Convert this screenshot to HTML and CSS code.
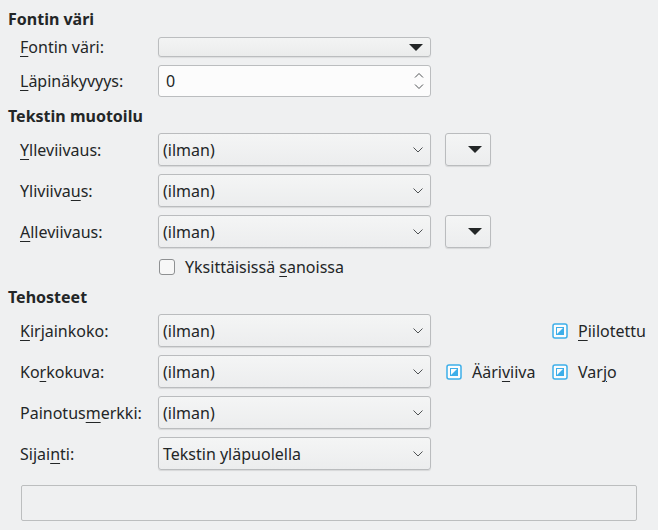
FILE: index.html
```html
<!DOCTYPE html>
<html lang="fi">
<head>
<meta charset="utf-8">
<title>Fontin tehosteet</title>
<link rel="stylesheet" href="styles.css">
</head>
<body>
<div class="page">
  <div class="heading">Fontin väri</div>
  <div class="form">
    <div class="lbl"><u>F</u>ontin väri:</div>
    <div class="colorcombo"><svg class="tri" width="14" height="7" viewBox="0 0 14 7"><path d="M0 0H14L7 7Z" fill="#232627"/></svg></div>
    <div></div>
    <div class="lbl"><u>L</u>äpinäkyvyys:</div>
    <div class="spin"><span>0</span>
      <svg class="spinarrows" width="10" height="18" viewBox="0 0 10 18"><path d="M1 5.5L5 1.5L9 5.5M1 12.5L5 16.5L9 12.5" fill="none" stroke="#4f5254" stroke-width="1"/></svg>
    </div>
    <div></div>
  </div>

  <div class="heading later">Tekstin muotoilu</div>
  <div class="form">
    <div class="lbl"><u>Y</u>lleviivaus:</div>
    <div class="combo"><span>(ilman)</span><svg width="10" height="6" viewBox="0 0 10 6"><path d="M0.5 0.5L5 5L9.5 0.5" fill="none" stroke="#4f5254" stroke-width="1"/></svg></div>
    <div class="sidebtn"><svg width="14" height="7" viewBox="0 0 14 7"><path d="M0 0H14L7 7Z" fill="#232627"/></svg></div>

    <div class="lbl">Yliviiva<u>u</u>s:</div>
    <div class="combo"><span>(ilman)</span><svg width="10" height="6" viewBox="0 0 10 6"><path d="M0.5 0.5L5 5L9.5 0.5" fill="none" stroke="#4f5254" stroke-width="1"/></svg></div>
    <div></div>

    <div class="lbl"><u>A</u>lleviivaus:</div>
    <div class="combo"><span>(ilman)</span><svg width="10" height="6" viewBox="0 0 10 6"><path d="M0.5 0.5L5 5L9.5 0.5" fill="none" stroke="#4f5254" stroke-width="1"/></svg></div>
    <div class="sidebtn"><svg width="14" height="7" viewBox="0 0 14 7"><path d="M0 0H14L7 7Z" fill="#232627"/></svg></div>

    <div></div>
    <div class="checkrow"><span class="box"></span><span>Yksittäisissä <u>s</u>anoissa</span></div>
  </div>

  <div class="heading later">Tehosteet</div>
  <div class="form">
    <div class="lbl"><u>K</u>irjainkoko:</div>
    <div class="combo"><span>(ilman)</span><svg width="10" height="6" viewBox="0 0 10 6"><path d="M0.5 0.5L5 5L9.5 0.5" fill="none" stroke="#4f5254" stroke-width="1"/></svg></div>
    <div class="checks">
      <div class="check second"><svg width="16" height="16" viewBox="0 0 16 16"><rect x="1" y="1" width="14" height="14" rx="2" fill="#fcfcfc" stroke="#3daee9" stroke-width="1.5"/><rect x="4.5" y="4.5" width="7" height="7" fill="#fcfcfc" stroke="#3daee9" stroke-width="1"/><path d="M4 12H12V4Z" fill="#3daee9"/></svg><span><u>P</u>iilotettu</span></div>
    </div>

    <div class="lbl">Ko<u>r</u>kokuva:</div>
    <div class="combo"><span>(ilman)</span><svg width="10" height="6" viewBox="0 0 10 6"><path d="M0.5 0.5L5 5L9.5 0.5" fill="none" stroke="#4f5254" stroke-width="1"/></svg></div>
    <div class="checks">
      <div class="check"><svg width="16" height="16" viewBox="0 0 16 16"><rect x="1" y="1" width="14" height="14" rx="2" fill="#fcfcfc" stroke="#3daee9" stroke-width="1.5"/><rect x="4.5" y="4.5" width="7" height="7" fill="#fcfcfc" stroke="#3daee9" stroke-width="1"/><path d="M4 12H12V4Z" fill="#3daee9"/></svg><span>Ääri<u>v</u>iiva</span></div>
      <div class="check"><svg width="16" height="16" viewBox="0 0 16 16"><rect x="1" y="1" width="14" height="14" rx="2" fill="#fcfcfc" stroke="#3daee9" stroke-width="1.5"/><rect x="4.5" y="4.5" width="7" height="7" fill="#fcfcfc" stroke="#3daee9" stroke-width="1"/><path d="M4 12H12V4Z" fill="#3daee9"/></svg><span>Var<u>j</u>o</span></div>
    </div>

    <div class="lbl">Painotus<u>m</u>erkki:</div>
    <div class="combo"><span>(ilman)</span><svg width="10" height="6" viewBox="0 0 10 6"><path d="M0.5 0.5L5 5L9.5 0.5" fill="none" stroke="#4f5254" stroke-width="1"/></svg></div>
    <div></div>

    <div class="lbl">Sijai<u>n</u>ti:</div>
    <div class="combo"><span>Tekstin yläpuolella</span><svg width="10" height="6" viewBox="0 0 10 6"><path d="M0.5 0.5L5 5L9.5 0.5" fill="none" stroke="#4f5254" stroke-width="1"/></svg></div>
    <div></div>
  </div>

  <div class="preview"></div>
</div>
</body>
</html>
```

FILE: styles.css
```css
html, body {
  margin: 0;
  padding: 0;
  background: #eff0f1;
}

body {
  font-family: "Noto Sans", "Open Sans", sans-serif;
  font-size: 16px;
  color: #232627;
  width: 658px;
  height: 530px;
  overflow: hidden;
}

.page {
  padding: 8px 0 0 8px;
}

u {
  text-decoration: underline;
  text-decoration-thickness: 1px;
  text-underline-offset: 3px;
}

.heading {
  font-weight: bold;
  line-height: 22px;
  margin-top: 0;
  margin-bottom: 7px;
}

.heading.later {
  margin-top: 8px;
  margin-bottom: 6px;
}

.form {
  display: grid;
  grid-template-columns: 138px 273px auto;
  row-gap: 8px;
  align-items: center;
  padding-left: 12px;
}

.lbl {
  line-height: 20px;
  white-space: nowrap;
}

.colorcombo {
  box-sizing: border-box;
  height: 20px;
  border: 1px solid #bbbdbf;
  border-radius: 3px;
  background: linear-gradient(#f3f4f4, #ebecec);
  box-shadow: 0 1px 1px rgba(0, 0, 0, 0.08);
  display: flex;
  align-items: center;
  justify-content: flex-end;
  padding-right: 7px;
}

.spin {
  box-sizing: border-box;
  height: 32px;
  border: 1px solid #bbbdbf;
  border-radius: 3px;
  background: #fcfcfc;
  display: flex;
  align-items: center;
  justify-content: space-between;
  padding: 0 6px 0 7px;
}

.combo {
  box-sizing: border-box;
  height: 33px;
  border: 1px solid #babcbe;
  border-radius: 3px;
  background: linear-gradient(#f4f5f5, #ecedee);
  box-shadow: 0 1px 1px rgba(0, 0, 0, 0.1);
  display: flex;
  align-items: center;
  justify-content: space-between;
  padding: 0 7px 0 4px;
  white-space: nowrap;
}

.sidebtn {
  box-sizing: border-box;
  width: 46px;
  height: 33px;
  margin-left: 14px;
  border: 1px solid #babcbe;
  border-radius: 3px;
  background: linear-gradient(#f4f5f5, #ecedee);
  box-shadow: 0 1px 1px rgba(0, 0, 0, 0.1);
  display: flex;
  align-items: center;
  justify-content: flex-end;
  padding-right: 8px;
}

.checkrow {
  grid-column: 2 / span 2;
  display: flex;
  align-items: center;
  gap: 10px;
  height: 22px;
  padding-left: 1px;
}

.box {
  box-sizing: border-box;
  width: 16px;
  height: 16px;
  border: 1px solid #8e9092;
  border-radius: 3px;
  background: #f7f7f7;
}

.checks {
  display: grid;
  grid-template-columns: 106px auto;
  margin-left: 15px;
  align-items: center;
}

.check {
  display: flex;
  align-items: center;
  gap: 10px;
  white-space: nowrap;
}

.check.second {
  grid-column: 2;
}

.preview {
  box-sizing: border-box;
  margin: 15px 0 0 13px;
  width: 616px;
  height: 36px;
  border: 1px solid #bcbebf;
  border-radius: 2px;
  background: #eff0f1;
}
```
